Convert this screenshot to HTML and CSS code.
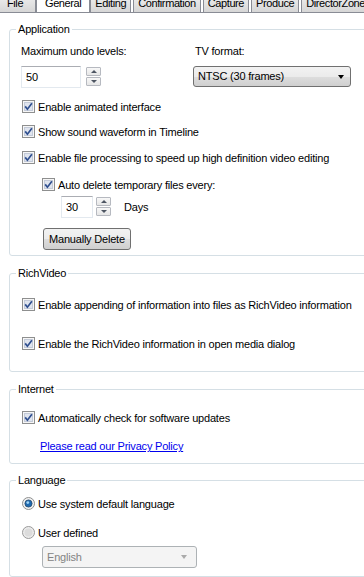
FILE: index.html
```html
<!DOCTYPE html>
<html lang="en">
<head>
    <meta charset="UTF-8">
    <title>Preferences - General</title>
    <link rel="stylesheet" href="styles.css">
</head>
<body>
    <svg class="defs" width="0" height="0">
        <symbol id="checked" viewBox="0 0 13 13">
            <rect x="0.5" y="0.5" width="12" height="12" fill="#f6f6f6" stroke="#8e8f8f"/>
            <rect x="2.5" y="2.5" width="8" height="8" fill="#dfe4ee" stroke="#c3cad8"/>
            <path d="M3.2 6.4 L5.4 9.2 L9.9 3.2" fill="none" stroke="#2f4f8f" stroke-width="1.7"/>
        </symbol>
        <symbol id="radio-on" viewBox="0 0 13 13">
            <circle cx="6.5" cy="6.5" r="6" fill="#f2f2f2" stroke="#8e8f8f"/>
            <circle cx="6.5" cy="6.5" r="3.6" fill="#1f6ab0" stroke="#27496b" stroke-width="0.8"/>
            <circle cx="5.8" cy="5.6" r="1.4" fill="#9fd3f5"/>
        </symbol>
        <symbol id="radio-off" viewBox="0 0 13 13">
            <circle cx="6.5" cy="6.5" r="6" fill="#ececec" stroke="#9a9a9a"/>
            <circle cx="6.5" cy="6.5" r="4" fill="#dcdcdc"/>
        </symbol>
    </svg>

    <div class="tabs">
        <div class="tab first">File</div>
        <div class="tab active">General</div>
        <div class="tab">Editing</div>
        <div class="tab">Confirmation</div>
        <div class="tab">Capture</div>
        <div class="tab">Produce</div>
        <div class="tab">DirectorZone</div>
    </div>

    <div class="panel">
        <fieldset class="group app">
            <legend>Application</legend>
            <div class="labels">
                <span class="col-left">Maximum undo levels:</span>
                <span>TV format:</span>
            </div>
            <div class="inputs">
                <div class="col-left number">
                    <div class="textbox wide">50</div>
                    <div class="spin"><span class="up"></span><span class="down"></span></div>
                </div>
                <div class="combo">NTSC (30 frames)<span class="arrow"></span></div>
            </div>
            <div class="check r1"><svg><use href="#checked"/></svg>Enable animated interface</div>
            <div class="check r2"><svg><use href="#checked"/></svg>Show sound waveform in Timeline</div>
            <div class="check r3"><svg><use href="#checked"/></svg>Enable file processing to speed up high definition video editing</div>
            <div class="check r4 indent"><svg><use href="#checked"/></svg>Auto delete temporary files every:</div>
            <div class="number days">
                <div class="textbox short">30</div>
                <div class="spin"><span class="up"></span><span class="down"></span></div>
                <span class="unit">Days</span>
            </div>
            <button class="btn">Manually Delete</button>
        </fieldset>

        <fieldset class="group rich">
            <legend>RichVideo</legend>
            <div class="check ra"><svg><use href="#checked"/></svg>Enable appending of information into files as RichVideo information</div>
            <div class="check rb"><svg><use href="#checked"/></svg>Enable the RichVideo information in open media dialog</div>
        </fieldset>

        <fieldset class="group net">
            <legend>Internet</legend>
            <div class="check ia"><svg><use href="#checked"/></svg>Automatically check for software updates</div>
            <a class="link" href="#">Please read our Privacy Policy</a>
        </fieldset>

        <fieldset class="group lang">
            <legend>Language</legend>
            <div class="check la"><svg><use href="#radio-on"/></svg>Use system default language</div>
            <div class="check lb"><svg><use href="#radio-off"/></svg>User defined</div>
            <div class="combo disabled">English<span class="arrow"></span></div>
        </fieldset>
    </div>
</body>
</html>
```

FILE: styles.css
```css
html, body {
    margin: 0;
    padding: 0;
    background: #fff;
    overflow: hidden;
}
body {
    font-family: "Liberation Sans", Arial, sans-serif;
    font-size: 11px;
    letter-spacing: -0.2px;
    color: #000;
}
.defs {
    position: absolute;
}

.tabs {
    display: flex;
    align-items: flex-end;
    height: 12px;
    overflow: hidden;
    border-bottom: 1px solid #898c95;
    letter-spacing: -0.4px;
}
.tab {
    height: 20px;
    line-height: 14px;
    padding: 3px 4px 0;
    margin-right: 2px;
    box-sizing: border-box;
    border: 1px solid #898c95;
    border-bottom: none;
    background: linear-gradient(#f2f2f2, #e4e4e4 50%, #d6d6d6);
    flex-shrink: 0;
}
.tab.first {
    width: 36px;
    padding-left: 7px;
    border-left: none;
    margin-right: 0;
}
.tab.active {
    background: #fff;
    height: 22px;
    margin: 0 0 -1px 0;
    padding: 4px 8px 0;
}

.panel {
    padding-top: 10px;
}

/* group boxes */
.group {
    margin: 0 -40px 11px 9px;
    padding: 0 0 0 11px;
    border: 1px solid #d5dfe5;
    border-radius: 3px;
    min-width: 0;
}
.group legend {
    padding: 0 2px;
    margin-left: -5px;
    line-height: 12px;
}
.group.app { padding-bottom: 5px; }
.group.rich { padding-bottom: 21px; }
.group.net { padding-bottom: 10px; margin-bottom: 10px; }
.group.lang { padding-bottom: 8px; margin-bottom: 0; }

.labels {
    display: flex;
    margin-top: 9px;
    height: 14px;
    line-height: 14px;
}
.col-left {
    width: 174px;
    flex-shrink: 0;
}
.inputs {
    display: flex;
    margin-top: 8px;
    height: 22px;
}
.number {
    display: flex;
    align-items: flex-start;
}

.textbox {
    height: 22px;
    box-sizing: border-box;
    border: 1px solid #e3e9ef;
    border-top-color: #abadb3;
    padding-left: 4px;
    line-height: 20px;
    background: #fff;
}
.textbox.wide { width: 60px; }
.textbox.short { width: 32px; }

.spin {
    display: flex;
    flex-direction: column;
    margin: 1px 0 0 5px;
    width: 15px;
    gap: 1px;
}
.spin span {
    height: 9px;
    box-sizing: border-box;
    border: 1px solid #b6b9c0;
    border-radius: 1px;
    background: linear-gradient(#f8f8f8, #e6e6e6);
    position: relative;
}
.spin span::after {
    content: "";
    position: absolute;
    left: 4px;
    top: 2px;
    border-left: 3px solid transparent;
    border-right: 3px solid transparent;
}
.spin .up::after { border-bottom: 3px solid #4d5562; }
.spin .down::after { border-top: 3px solid #4d5562; }

.combo {
    position: relative;
    width: 158px;
    height: 21px;
    box-sizing: border-box;
    margin-left: -2px;
    border: 1px solid #707070;
    border-radius: 3px;
    background: linear-gradient(#f2f2f2, #ebebeb 50%, #dddddd 51%, #cfcfcf);
    padding-left: 4px;
    line-height: 19px;
}
.combo .arrow {
    position: absolute;
    right: 6px;
    top: 8px;
    border-left: 3.5px solid transparent;
    border-right: 3.5px solid transparent;
    border-top: 4px solid #000;
}
.combo.disabled {
    width: 155px;
    height: 22px;
    margin: 7px 0 0 21px;
    border-color: #adb2b5;
    background: #f4f4f4;
    color: #838383;
    line-height: 20px;
}
.combo.disabled .arrow {
    border-top-color: #aaa;
    right: 9px;
}

.check {
    display: flex;
    align-items: center;
    height: 13px;
    margin-left: 1px;
    white-space: nowrap;
}
.check svg {
    width: 13px;
    height: 13px;
    margin-right: 3px;
    flex-shrink: 0;
}
.check.indent { margin-left: 21px; }
.r1 { margin-top: 12px; }
.r2 { margin-top: 12px; }
.r3 { margin-top: 13px; }
.r4 { margin-top: 14px; }
.ra { margin-top: 19px; }
.rb { margin-top: 26px; }
.ia { margin-top: 16px; }
.la { margin-top: 11px; }
.lb { margin-top: 16px; }

.days {
    margin: 5px 0 0 40px;
}
.days .spin { margin-left: 3px; }
.unit {
    margin-left: 13px;
    line-height: 22px;
}

.btn {
    display: block;
    margin: 10px 0 0 22px;
    height: 22px;
    padding: 0 5px;
    font: inherit;
    letter-spacing: inherit;
    color: #000;
    border: 1px solid #707070;
    border-radius: 3px;
    background: linear-gradient(#f2f2f2, #ebebeb 50%, #dddddd 51%, #cfcfcf);
}

.link {
    display: block;
    margin: 15px 0 0 19px;
    line-height: 14px;
    color: #0000ee;
    text-decoration: underline;
}
```
